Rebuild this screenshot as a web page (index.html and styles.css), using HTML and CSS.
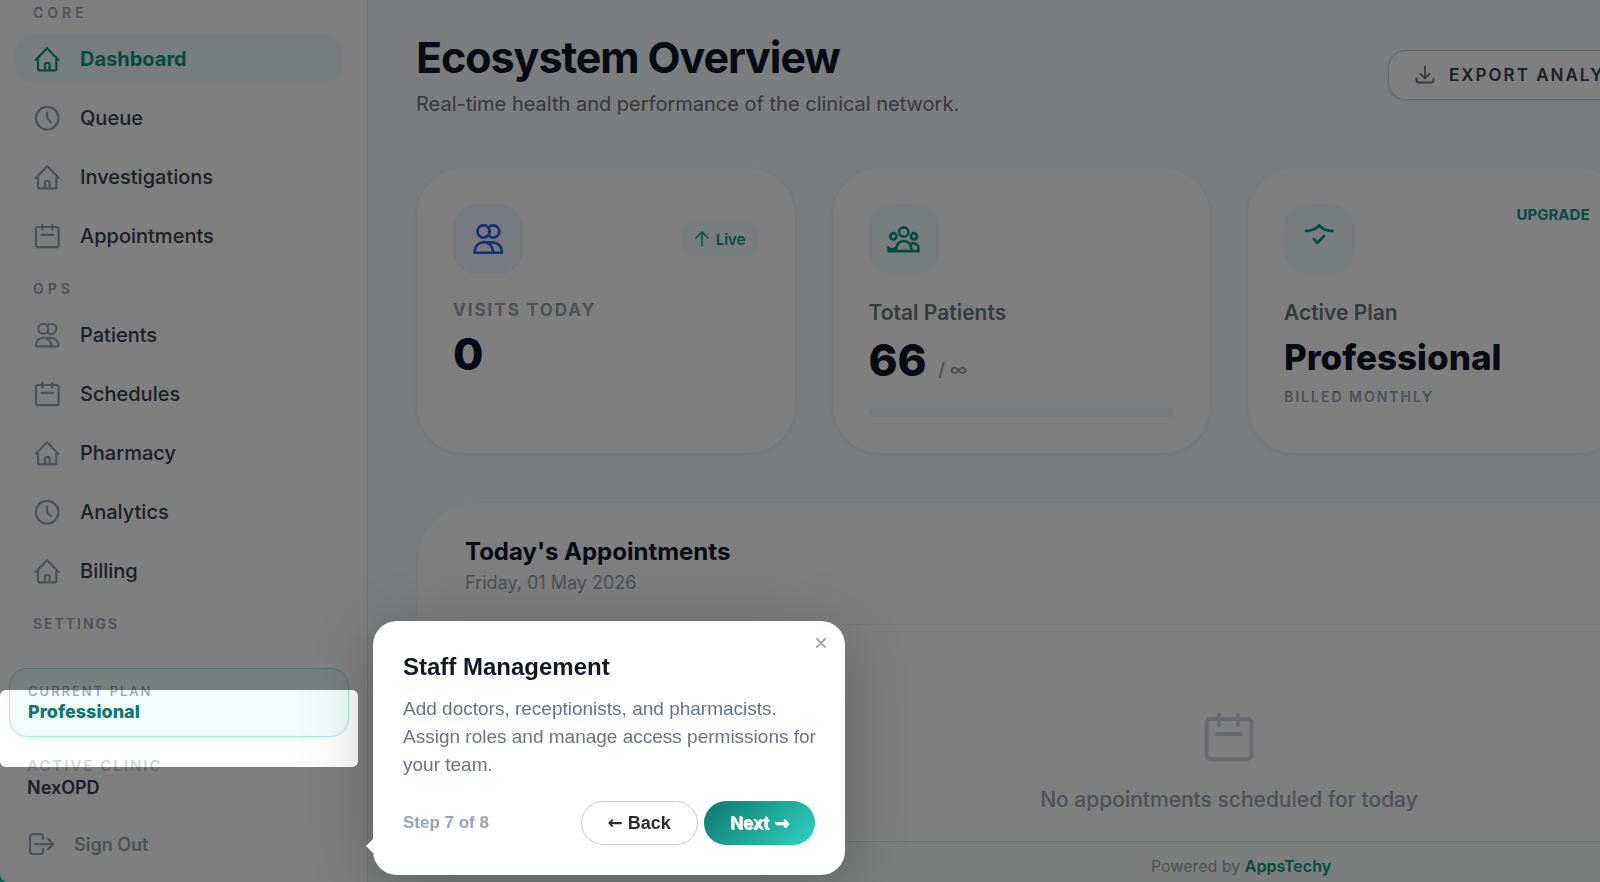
FILE: index.html
```html
<!DOCTYPE html>
<html lang="en">
<head>
    <meta charset="UTF-8">
    <meta name="viewport" content="width=device-width, initial-scale=1.0">
    <title>NexOPD - Dashboard</title>
    <link rel="stylesheet" href="styles.css">
</head>
<body>
    <!-- shared icons -->
    <svg class="sprite" aria-hidden="true">
        <symbol id="i-home" viewBox="0 0 28 28"><path d="M2.7 15 14.1 3.2 25.5 15M5 12.8v11.6a1 1 0 0 0 1 1h16.3a1 1 0 0 0 1-1V12.8M12 25.4v-6.1c0-.8.5-1.3 1.3-1.3h2c.8 0 1.3.5 1.3 1.3v6.1"/></symbol>
        <symbol id="i-clock" viewBox="0 0 28 28"><circle cx="14.2" cy="14.2" r="11.3"/><path d="M14.1 8.6v4.7c0 .8.2 1.4.8 2l3 3"/></symbol>
        <symbol id="i-calendar" viewBox="0 0 28 28"><rect x="3" y="5" width="22.6" height="20.2" rx="2"/><path d="M9.3 3v4.5M19.3 3v4.5M8.3 12.8h12"/></symbol>
        <symbol id="i-users" viewBox="0 0 28 28"><circle cx="10.3" cy="7.8" r="5"/><path d="M14.8 4.2a5 5 0 1 1 0 7.2M3 25.3v-1.1a7.5 7.5 0 0 1 15.2 0v1.1zM13.4 16.8h4.4c4.2 0 7.6 3.3 7.6 7.4v1.1h-7.2"/></symbol>
    </svg>

    <div class="app">
        <aside class="sidebar">
            <nav class="menu">
                <h2 class="label wide">CORE</h2>
                <a href="#" class="item active"><svg class="icon"><use href="#i-home"/></svg>Dashboard</a>
                <a href="#" class="item"><svg class="icon"><use href="#i-clock"/></svg>Queue</a>
                <a href="#" class="item"><svg class="icon"><use href="#i-home"/></svg>Investigations</a>
                <a href="#" class="item"><svg class="icon"><use href="#i-calendar"/></svg>Appointments</a>
                <h2 class="label wide">OPS</h2>
                <a href="#" class="item"><svg class="icon"><use href="#i-users"/></svg>Patients</a>
                <a href="#" class="item"><svg class="icon"><use href="#i-calendar"/></svg>Schedules</a>
                <a href="#" class="item"><svg class="icon"><use href="#i-home"/></svg>Pharmacy</a>
                <a href="#" class="item"><svg class="icon"><use href="#i-clock"/></svg>Analytics</a>
                <a href="#" class="item"><svg class="icon"><use href="#i-home"/></svg>Billing</a>
                <h2 class="label">SETTINGS</h2>
            </nav>
            <div class="side-bottom">
                <div class="plan">
                    <p class="plan-label">CURRENT PLAN</p>
                    <p class="plan-name">Professional</p>
                </div>
                <div class="clinic">
                    <p class="clinic-label">ACTIVE CLINIC</p>
                    <p class="clinic-name">NexOPD</p>
                </div>
                <button type="button" class="signout">
                    <svg class="icon" viewBox="0 0 28 28"><path d="M16 9V7a2.8 2.8 0 0 0-2.8-2.8H5.8A2.8 2.8 0 0 0 3 7v14.2A2.8 2.8 0 0 0 5.8 24h7.4a2.8 2.8 0 0 0 2.8-2.8v-2M8 14.1h18M20.6 8.5l5.6 5.6-5.6 5.6"/></svg>
                    Sign Out
                </button>
            </div>
        </aside>

        <div class="page">
            <main class="content">
                <header class="head">
                    <div>
                        <h1>Ecosystem Overview</h1>
                        <p class="sub">Real-time health and performance of the clinical network.</p>
                    </div>
                    <div class="actions">
                        <button type="button" class="export">
                            <svg class="icon-sm" viewBox="0 0 20 20"><path d="M10 1.5V13M5.5 8.8l4.5 4.5 4.5-4.5M1.5 13.5V15A2.5 2.5 0 0 0 4 17.5h12a2.5 2.5 0 0 0 2.5-2.5v-1.5"/></svg>
                            EXPORT ANALYTICS
                        </button>
                    </div>
                </header>

                <section class="cards">
                    <article class="card">
                        <div class="card-top">
                            <span class="tile blue"><svg class="icon-lg"><use href="#i-users"/></svg></span>
                            <span class="live"><svg class="icon-xs" viewBox="0 0 16 16"><path d="M8 1v14M2 7l6-6 6 6"/></svg>Live</span>
                        </div>
                        <h3 class="card-label upper">VISITS TODAY</h3>
                        <p class="num">0</p>
                    </article>
                    <article class="card">
                        <div class="card-top">
                            <span class="tile teal"><svg class="icon-xl" viewBox="0 0 36 36"><circle cx="17.7" cy="11" r="4.7"/><circle cx="7.3" cy="15.3" r="3.1"/><circle cx="28" cy="15.3" r="3.1"/><path d="M10.3 30.2v-2.7a7.5 7.5 0 0 1 15 0v2.7M23.5 23.3c1-.7 2.2-.9 3.7-.9 3 0 5.3 2 5.3 4.8v3H2.5v-3.7c1.5 2.2 4.5 2.2 7 .8M3 29h7"/></svg></span>
                        </div>
                        <h3 class="card-label">Total Patients</h3>
                        <p class="num">66 <span class="limit">/ ∞</span></p>
                        <div class="bar"></div>
                    </article>
                    <article class="card">
                        <div class="card-top">
                            <span class="tile teal"><svg class="icon-xl" viewBox="0 0 36 36"><path d="M5 9.8c5.3.3 9.5-1.6 13.2-5.3 3.7 3.7 8 5.6 13.3 5.3M13 18.3l3.3 3.4L23 15"/></svg></span>
                            <a href="#" class="upgrade">UPGRADE</a>
                        </div>
                        <h3 class="card-label">Active Plan</h3>
                        <p class="plan-big">Professional</p>
                        <p class="billed">BILLED MONTHLY</p>
                    </article>
                    <article class="card"></article>
                </section>

                <section class="appointments">
                    <div class="app-head">
                        <h2>Today's Appointments</h2>
                        <p>Friday, 01 May 2026</p>
                    </div>
                    <div class="empty">
                        <svg class="icon-empty" viewBox="0 0 56 56"><rect x="5.5" y="10" width="45" height="40" rx="4"/><path d="M18 6v10M37 6v10M16 25h24"/></svg>
                        <p>No appointments scheduled for today</p>
                    </div>
                </section>
            </main>
            <footer class="footer">Powered by <a href="#">AppsTechy</a></footer>
        </div>
    </div>

    <!-- guided tour -->
    <div class="spotlight"></div>
    <div class="tour" role="dialog" aria-labelledby="tour-title">
        <button type="button" class="close" aria-label="Close">×</button>
        <h2 id="tour-title">Staff Management</h2>
        <p class="tour-text">Add doctors, receptionists, and pharmacists. Assign roles and manage access permissions for your team.</p>
        <div class="tour-foot">
            <span class="step">Step 7 of 8</span>
            <button type="button" class="back"><span class="arrow">←</span> Back</button>
            <button type="button" class="next">Next <span class="arrow">→</span></button>
        </div>
    </div>
</body>
</html>
```

FILE: styles.css
```css
* {
    box-sizing: border-box;
    margin: 0;
    padding: 0;
}
body {
    font-family: Inter, "Liberation Sans", sans-serif;
    color: #0f172a;
    background-color: #14b8a6;
    overflow: hidden;
}
a {
    text-decoration: none;
}
button {
    font-family: inherit;
    cursor: pointer;
}
.sprite {
    display: none;
}
svg {
    flex: none;
    fill: none;
    stroke: currentColor;
    stroke-width: 2.2;
    stroke-linecap: round;
    stroke-linejoin: round;
}
.icon {
    width: 28px;
    height: 28px;
    color: #9ca3af;
}
.icon-xs {
    width: 16px;
    height: 16px;
    stroke-width: 1.5;
}
.icon-sm {
    width: 20px;
    height: 20px;
    color: #6b7280;
    stroke-width: 1.8;
}
.icon-lg {
    width: 34px;
    height: 34px;
}
.icon-xl {
    width: 36px;
    height: 36px;
    stroke-width: 2.7;
}
.icon-empty {
    width: 56px;
    height: 56px;
    color: #d1d5db;
    stroke-width: 4;
}
.app {
    display: flex;
    height: 100vh;
}

/* sidebar */
.sidebar {
    display: flex;
    flex-direction: column;
    flex: none;
    width: 368px;
    background-color: #fff;
    border-right: 1px solid #e2e8f0;
    border-bottom-left-radius: 8px;
}
.menu {
    display: flex;
    flex-direction: column;
    gap: 12px;
    height: 638px;
    padding: 3px 24px 0 15px;
    border-bottom: 1px solid #f8fafc;
    overflow: hidden;
}
.label {
    margin-top: 8px;
    padding: 0 18px;
    font-size: 14px;
    line-height: 20px;
    font-weight: 600;
    letter-spacing: 2px;
    color: #9ca3af;
}
.label:first-child {
    margin-top: 0;
}
.label.wide {
    letter-spacing: 4px;
}
.item {
    display: flex;
    align-items: center;
    gap: 19px;
    flex: none;
    height: 47px;
    padding: 0 18px;
    border-radius: 18px;
    font-size: 20px;
    font-weight: 500;
    color: #374151;
}
.item.active {
    background-color: #f0fdfa;
    color: #0d9488;
    font-weight: 700;
}
.item.active .icon {
    color: #0d9488;
}
.side-bottom {
    padding: 30px 18px 0 9px;
}
.plan {
    height: 69px;
    padding: 13px 18px 0;
    border: 1px solid #99f6e4;
    border-radius: 18px;
    background-color: #f0fdfa;
}
.plan-label {
    font-size: 13px;
    line-height: 18px;
    font-weight: 500;
    letter-spacing: 2px;
    color: #9ca3af;
}
.plan-name {
    font-size: 18px;
    line-height: 24px;
    font-weight: 800;
    color: #0f766e;
}
.clinic {
    padding: 19px 18px 0;
}
.clinic-label {
    font-size: 15px;
    line-height: 20px;
    font-weight: 600;
    letter-spacing: 2px;
    color: #cbd5e1;
}
.clinic-name {
    font-size: 18px;
    line-height: 24px;
    font-weight: 600;
    color: #374151;
}
.signout {
    display: flex;
    align-items: center;
    gap: 19px;
    height: 48px;
    margin-top: 20px;
    padding: 0 18px;
    border: 0;
    background: none;
    font-size: 18px;
    font-weight: 600;
    color: #9ca3af;
}

/* page */
.page {
    display: flex;
    flex-direction: column;
    flex: none;
    width: calc(100% + 146px);
    background-color: #f8fafc;
}
.content {
    flex: 1;
    min-height: 0;
    padding: 31px 72px 0 48px;
    overflow: hidden;
}
.head {
    display: grid;
    grid-template-columns: 1fr 654px;
    align-items: center;
}
h1 {
    font-size: 43px;
    line-height: 52px;
    font-weight: 700;
    letter-spacing: -0.025em;
}
.sub {
    margin-top: 6px;
    font-size: 20px;
    line-height: 30px;
    color: #6b7280;
}
.export {
    display: inline-flex;
    align-items: center;
    gap: 14px;
    height: 50px;
    padding: 0 26px;
    border: 1px solid #cbd5e1;
    border-radius: 18px;
    background-color: #fff;
    box-shadow: 0 1px 3px rgba(0, 0, 0, 0.1);
    font-size: 17px;
    font-weight: 600;
    letter-spacing: 2px;
    color: #374151;
}
.cards {
    display: grid;
    grid-template-columns: repeat(4, 1fr);
    gap: 36px;
    margin-top: 48px;
}
.card {
    min-height: 287px;
    padding: 36px;
    border: 1px solid #f1f5f9;
    border-radius: 48px;
    background-color: #fff;
    box-shadow: 0 1px 3px rgba(0, 0, 0, 0.06);
}
.card-top {
    display: flex;
    justify-content: space-between;
    align-items: center;
    margin-bottom: 24px;
}
.tile {
    display: flex;
    align-items: center;
    justify-content: center;
    width: 70px;
    height: 70px;
    border-radius: 24px;
}
.blue {
    background-color: #eff6ff;
    color: #2563eb;
}
.teal {
    background-color: #f0fdfa;
    color: #0d9488;
}
.live {
    display: flex;
    align-items: center;
    gap: 6px;
    height: 34px;
    padding: 0 13px;
    border-radius: 12px;
    background-color: #f0fdfa;
    font-size: 15px;
    font-weight: 600;
    color: #0d9488;
}
.upgrade {
    align-self: flex-start;
    font-size: 15px;
    line-height: 22px;
    font-weight: 700;
    color: #0d9488;
}
.card-label {
    font-size: 21px;
    line-height: 30px;
    font-weight: 600;
    color: #6b7280;
}
.card-label.upper {
    font-size: 17px;
    line-height: 24px;
    font-weight: 700;
    letter-spacing: 2px;
    color: #9ca3af;
}
.num {
    font-size: 44px;
    line-height: 64px;
    font-weight: 800;
}
.limit {
    margin-left: 2px;
    font-size: 18px;
    line-height: 24px;
    font-weight: 600;
    color: #9ca3af;
}
.bar {
    height: 9px;
    margin-top: 16px;
    border-radius: 5px;
    background-color: #f1f5f9;
}
.plan-big {
    margin-top: 3px;
    font-size: 35px;
    line-height: 52px;
    font-weight: 800;
}
.billed {
    font-size: 14px;
    line-height: 28px;
    font-weight: 600;
    letter-spacing: 2px;
    color: #9ca3af;
}
.appointments {
    margin-top: 48px;
    height: 400px;
    border: 1px solid #f1f5f9;
    border-radius: 60px;
    background-color: #fff;
}
.app-head {
    height: 122px;
    padding: 33px 48px 0;
    border-bottom: 1px solid #f1f5f9;
}
.app-head h2 {
    font-size: 24px;
    line-height: 32px;
    font-weight: 700;
}
.app-head p {
    margin-top: 2px;
    font-size: 18px;
    line-height: 26px;
    color: #9ca3af;
}
.empty {
    display: flex;
    flex-direction: column;
    align-items: center;
    gap: 20px;
    padding-top: 84px;
    font-size: 21px;
    line-height: 30px;
    font-weight: 500;
    color: #9ca3af;
}
.footer {
    height: 41px;
    padding-top: 12px;
    border-top: 1px solid #e2e8f0;
    background-color: #f8fcfa;
    text-align: center;
    font-size: 16px;
    line-height: 24px;
    color: #9ca3af;
}
.footer a {
    font-weight: 600;
    color: #0d9488;
}

/* tour: the hole is the box, its shadow dims everything else */
.spotlight {
    position: fixed;
    left: 0;
    top: 690px;
    width: 358px;
    height: 77px;
    border-radius: 6px;
    box-shadow: 0 0 0 9999px rgba(0, 0, 0, 0.5);
}
.tour {
    position: fixed;
    left: 373px;
    top: 621px;
    width: 472px;
    padding: 29px 30px 30px;
    border-radius: 24px;
    background-color: #fff;
    box-shadow: 0 10px 70px rgba(0, 0, 0, 0.25);
    font-family: "Liberation Sans", sans-serif;
}
.tour::before {
    content: "";
    position: absolute;
    left: -7px;
    bottom: 22px;
    border: 7px solid transparent;
    border-left-width: 0;
    border-right-color: #fff;
}
.tour h2 {
    font-size: 24px;
    line-height: 34px;
    font-weight: 700;
}
.tour-text {
    margin-top: 11px;
    margin-right: -8px;
    font-size: 19px;
    line-height: 28px;
    color: #64748b;
}
.close {
    position: absolute;
    top: 6px;
    right: 8px;
    width: 32px;
    height: 32px;
    border: 0;
    background: none;
    font-size: 24px;
    color: #94a3b8;
}
.tour-foot {
    display: flex;
    align-items: center;
    gap: 6px;
    margin-top: 22px;
}
.step {
    margin-right: auto;
    font-size: 17px;
    font-weight: 700;
    color: #94a3b8;
}
.back, .next {
    height: 44px;
    padding: 0 26px;
    border-radius: 22px;
    font-size: 18px;
    font-weight: 700;
}
.back {
    border: 1px solid #ccc;
    background-color: #fff;
    color: #2d2d2d;
}
.next {
    border: 0;
    background: linear-gradient(135deg, #0f766e, #2dd4bf);
    color: #fff;
    text-shadow: 1px 1px 0 #fff;
}
.arrow {
    font-family: "DejaVu Sans", sans-serif;
}
```
